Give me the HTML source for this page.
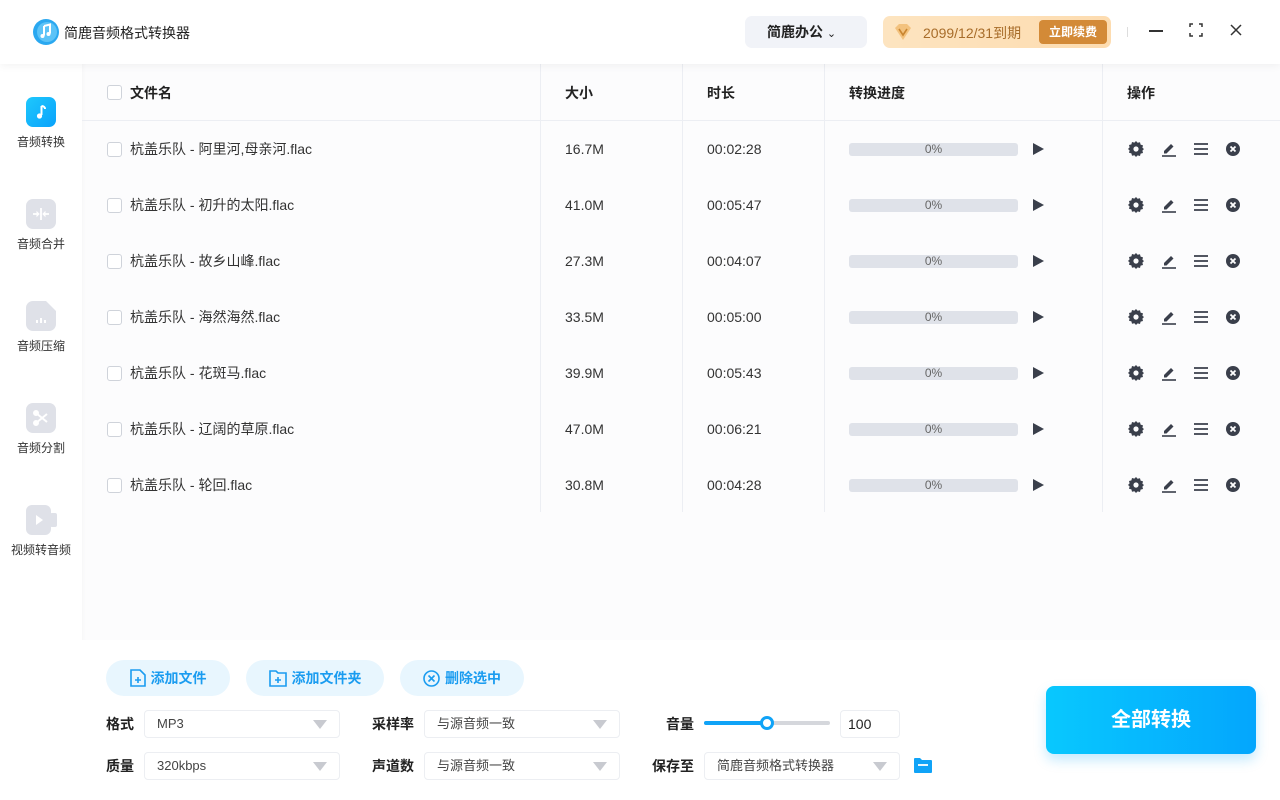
<!DOCTYPE html>
<html><head><meta charset="utf-8"><style>
*{margin:0;padding:0;box-sizing:border-box}
body{width:1280px;height:800px;overflow:hidden;font-family:"Liberation Sans","Noto Sans CJK SC",sans-serif;background:#fff;position:relative;color:#333}
.a{position:absolute}
.hdr{left:0;top:0;width:1280px;height:64px;background:#fff;box-shadow:0 2px 8px rgba(0,0,0,.05);z-index:2}
.main{left:82px;top:64px;width:1198px;height:576px;background:#fcfcfd;box-shadow:inset 6px 0 6px -6px rgba(0,0,0,.04)}
.bot{left:82px;top:640px;width:1198px;height:160px;background:#fff}
.side{left:0;top:64px;width:82px;height:736px;background:#fff}
.si{position:absolute;left:26px;width:30px;height:30px;border-radius:7px;background:#dfe1e8}
.sl{position:absolute;left:0;width:82px;text-align:center;font-size:12px;color:#333}
.vl{position:absolute;top:64px;width:1px;height:448px;background:#eceef3}
.th{position:absolute;top:83px;font-size:14px;font-weight:bold;color:#222}
.cb{position:absolute;left:107px;width:15px;height:15px;border:1px solid #cfd3da;border-radius:3px;background:#fff}
.t{position:absolute;font-size:14px;color:#333;line-height:16px}
.pb{position:absolute;left:849px;width:169px;height:13px;border-radius:3px;background:#dfe2e9;font-size:12px;color:#666;text-align:center;line-height:13px}
.btn{position:absolute;top:660px;height:36px;border-radius:18px;background:#e8f6fe;color:#1a9cf0;font-size:14px;font-weight:bold;line-height:36px;text-align:center}
.lb{position:absolute;font-size:14px;font-weight:bold;color:#222}
.sel{position:absolute;height:28px;border:1px solid #eceef2;border-radius:4px;background:#fff;font-size:13px;color:#444;line-height:26px;padding-left:12px}
.sel:after{content:"";position:absolute;right:12px;top:9px;border-left:7px solid transparent;border-right:7px solid transparent;border-top:9px solid #c8cad0}
</style></head><body>
<div class="a hdr">
 <svg class="a" style="left:32px;top:18px" width="28" height="28" viewBox="0 0 28 28"><circle cx="14" cy="14" r="13" fill="#2aa8f0"/><circle cx="15" cy="14" r="10" fill="#5cc3f7"/><path d="M12 8v9.5" stroke="#fff" stroke-width="2"/><path d="M12 8l6-1.5v9" stroke="#fff" stroke-width="2" fill="none"/><circle cx="10.5" cy="18" r="2" fill="#fff"/><circle cx="16.5" cy="16" r="2" fill="#fff"/></svg>
 <div class="a" style="left:64px;top:23px;font-size:14px;color:#222">简鹿音频格式转换器</div>
 <div class="a" style="left:745px;top:16px;width:122px;height:32px;border-radius:7px;background:#f1f3f8;font-size:14px;font-weight:bold;line-height:32px;padding-left:22px;color:#222">简鹿办公 <span style="font-weight:normal;font-size:11px">&#8964;</span></div>
 <div class="a" style="left:883px;top:16px;width:228px;height:32px;border-radius:7px;background:linear-gradient(90deg,#fde4c0,#fddcb0)"></div>
 <svg class="a" style="left:893px;top:23px" width="20" height="18" viewBox="0 0 20 18"><path d="M2 5l4-4h8l4 4-8 12z" fill="#f3c27e"/><path d="M6 6l4 6 4-6" stroke="#c9852f" stroke-width="1.6" fill="none"/></svg>
 <div class="a" style="left:923px;top:23px;font-size:14px;color:#a86d2a">2099/12/31到期</div>
 <div class="a" style="left:1039px;top:20px;width:68px;height:24px;border-radius:4px;background:#d38a37;color:#fff;font-size:12px;font-weight:bold;line-height:24px;text-align:center">立即续费</div>
 <div class="a" style="left:1127px;top:27px;width:1px;height:10px;background:#ddd"></div>
 <div class="a" style="left:1149px;top:30px;width:14px;height:1.5px;background:#333"></div>
 <svg class="a" style="left:1189px;top:23px" width="14" height="14" viewBox="0 0 14 14" fill="none" stroke="#333" stroke-width="1.5"><path d="M1 4V1h3M10 1h3v3M13 10v3h-3M4 13H1v-3"/></svg>
 <svg class="a" style="left:1230px;top:24px" width="12" height="12" viewBox="0 0 12 12" stroke="#333" stroke-width="1.5"><path d="M1 1l10 10M11 1L1 11"/></svg>
</div>
<div class="a side">
 <div class="si" style="top:33px;background:linear-gradient(135deg,#1ec8fd,#0aa2fb)"><svg width="30" height="30" viewBox="0 0 30 30"><path d="M15.5 9v9" stroke="#fff" stroke-width="2"/><path d="M15.5 9c2 0 3.5 1 3.5 3" stroke="#fff" stroke-width="2" fill="none"/><circle cx="13.5" cy="19" r="2.6" fill="#fff"/></svg></div>
 <div class="sl" style="top:69px">音频转换</div>
 <div class="si" style="top:135px"><svg width="30" height="30" viewBox="0 0 30 30" stroke="#fff" stroke-width="1.8" fill="#fff"><path d="M15 9v12"/><path d="M7 15h4M23 15h-4"/><path d="M11 13l2 2-2 2zM19 13l-2 2 2 2z" stroke-width="1"/></svg></div>
 <div class="sl" style="top:171px">音频合并</div>
 <div class="si" style="top:237px;border-radius:7px 2px 7px 7px"><svg width="30" height="30" viewBox="0 0 30 30"><path d="M20 0h10v10z" fill="#fff"/><path d="M11 19v3M15 17v5M19 19v3" stroke="#fff" stroke-width="2"/></svg></div>
 <div class="sl" style="top:273px">音频压缩</div>
 <div class="si" style="top:339px"><svg width="30" height="30" viewBox="0 0 30 30" stroke="#fff" stroke-width="2"><path d="M10 10l11 9M10 20l11-9"/><circle cx="10" cy="10" r="2" fill="#fff"/><circle cx="10" cy="20" r="2" fill="#fff"/></svg></div>
 <div class="sl" style="top:375px">音频分割</div>
 <div class="si" style="top:441px;width:25px;border-radius:6px"><svg width="25" height="30" viewBox="0 0 25 30"><path d="M10 10l7 5-7 5z" fill="#fff"/></svg></div>
 <div class="a" style="left:50px;top:449px;width:7px;height:14px;border-radius:2px;background:#dfe1e8"></div>
 <div class="sl" style="top:477px">视频转音频</div>
</div>
<div class="a main"></div>
<div class="a bot"></div>
<div class="a" style="left:82px;top:120px;width:1198px;height:1px;background:#eceef3"></div>
<div class="vl" style="left:540px"></div><div class="vl" style="left:682px"></div><div class="vl" style="left:824px"></div><div class="vl" style="left:1102px"></div>
<div class="cb" style="top:85px"></div>
<div class="th" style="left:130px">文件名</div><div class="th" style="left:565px">大小</div><div class="th" style="left:707px">时长</div><div class="th" style="left:849px">转换进度</div><div class="th" style="left:1127px">操作</div>
<div id="rows"></div>
<div class="btn" style="left:106px;width:124px"><svg style="vertical-align:-4px;margin-right:5px" width="16" height="18" viewBox="0 0 16 18" fill="none" stroke="#1a9cf0" stroke-width="1.6"><path d="M1 1h9l5 5v11H1z"/><path d="M5 11h6M8 8v6"/></svg>添加文件</div>
<div class="btn" style="left:246px;width:138px"><svg style="vertical-align:-4px;margin-right:5px" width="18" height="17" viewBox="0 0 18 17" fill="none" stroke="#1a9cf0" stroke-width="1.6"><path d="M1 1h6l2 2h8v13H1z"/><path d="M6 10h6M9 7v6"/></svg>添加文件夹</div>
<div class="btn" style="left:400px;width:124px"><svg style="vertical-align:-4px;margin-right:5px" width="17" height="17" viewBox="0 0 17 17" fill="none" stroke="#1a9cf0" stroke-width="1.6"><circle cx="8.5" cy="8.5" r="7.5"/><path d="M5.5 5.5l6 6M11.5 5.5l-6 6"/></svg>删除选中</div>
<div class="lb" style="left:106px;top:714px">格式</div><div class="sel" style="left:144px;top:710px;width:196px">MP3</div>
<div class="lb" style="left:106px;top:756px">质量</div><div class="sel" style="left:144px;top:752px;width:196px">320kbps</div>
<div class="lb" style="left:372px;top:714px">采样率</div><div class="sel" style="left:424px;top:710px;width:196px">与源音频一致</div>
<div class="lb" style="left:372px;top:756px">声道数</div><div class="sel" style="left:424px;top:752px;width:196px">与源音频一致</div>
<div class="lb" style="left:666px;top:714px">音量</div>
<div class="a" style="left:704px;top:721px;width:126px;height:4px;border-radius:2px;background:#d5d7dc"></div>
<div class="a" style="left:704px;top:721px;width:63px;height:4px;border-radius:2px;background:#10a3f7"></div>
<div class="a" style="left:760px;top:716px;width:14px;height:14px;border-radius:50%;border:3px solid #10a3f7;background:#fff"></div>
<div class="a" style="left:840px;top:710px;width:60px;height:28px;border:1px solid #eceef2;border-radius:4px;font-size:14px;line-height:26px;padding-left:7px;color:#222">100</div>
<div class="lb" style="left:652px;top:756px">保存至</div><div class="sel" style="left:704px;top:752px;width:196px">简鹿音频格式转换器</div>
<svg class="a" style="left:913px;top:757px" width="20" height="17" viewBox="0 0 20 17"><path d="M1 2a1 1 0 011-1h5l2 2h9a1 1 0 011 1v11a1 1 0 01-1 1H2a1 1 0 01-1-1z" fill="#10a3f7"/><path d="M5 8h10" stroke="#fff" stroke-width="1.8"/></svg>
<div class="a" style="left:1046px;top:686px;width:210px;height:68px;border-radius:8px;background:linear-gradient(90deg,#08c8fe,#04a6fd);box-shadow:0 6px 12px rgba(20,170,250,.25);color:#fff;font-size:20px;font-weight:bold;text-align:center;line-height:68px">全部转换</div>
<script>
var d=[["阿里河,母亲河","16.7M","00:02:28"],["初升的太阳","41.0M","00:05:47"],["故乡山峰","27.3M","00:04:07"],["海然海然","33.5M","00:05:00"],["花斑马","39.9M","00:05:43"],["辽阔的草原","47.0M","00:06:21"],["轮回","30.8M","00:04:28"]];
var h="";d.forEach(function(r,i){var y=149+i*56;
h+='<div class="cb" style="top:'+(y-7)+'px"></div><div class="t" style="left:130px;top:'+(y-8)+'px">杭盖乐队 - '+r[0]+'.flac</div><div class="t" style="left:565px;top:'+(y-8)+'px">'+r[1]+'</div><div class="t" style="left:707px;top:'+(y-8)+'px">'+r[2]+'</div><div class="pb" style="top:'+(y-6)+'px">0%</div>'+
'<svg class="a" style="left:1033px;top:'+(y-6)+'px" width="11" height="12"><path d="M0 0l11 6-11 6z" fill="#3a3f4b"/></svg>'+
'<svg class="a" style="left:1128px;top:'+(y-8)+'px" width="16" height="16" viewBox="0 0 16 16"><path d="M8 0l1.6 1.8 2.4-.6.6 2.4 2.4.8-.6 2.4L16 8l-1.6 1.6.6 2.4-2.4.6-.6 2.4-2.4-.6L8 16l-1.6-1.8-2.4.6-.6-2.4-2.4-.6.6-2.4L0 8l1.6-1.6L1 4l2.4-.6L4 1l2.4.6z" fill="#3a3f4b"/><circle cx="8" cy="8" r="2.6" fill="#fcfcfd"/></svg>'+
'<svg class="a" style="left:1161px;top:'+(y-8)+'px" width="16" height="16" viewBox="0 0 16 16"><path d="M3 10l7-7 2.5 2.5-7 7H3z" fill="#3a3f4b"/><path d="M1 15h14" stroke="#3a3f4b" stroke-width="1.6"/></svg>'+
'<svg class="a" style="left:1194px;top:'+(y-7)+'px" width="14" height="14"><path d="M0 2h14M0 7h14M0 12h14" stroke="#3a3f4b" stroke-width="1.8"/></svg>'+
'<svg class="a" style="left:1226px;top:'+(y-7)+'px" width="14" height="14" viewBox="0 0 14 14"><circle cx="7" cy="7" r="7" fill="#3a3f4b"/><path d="M4.5 4.5l5 5M9.5 4.5l-5 5" stroke="#fff" stroke-width="1.8"/></svg>';});
document.getElementById("rows").innerHTML=h;
</script>
</body></html>
